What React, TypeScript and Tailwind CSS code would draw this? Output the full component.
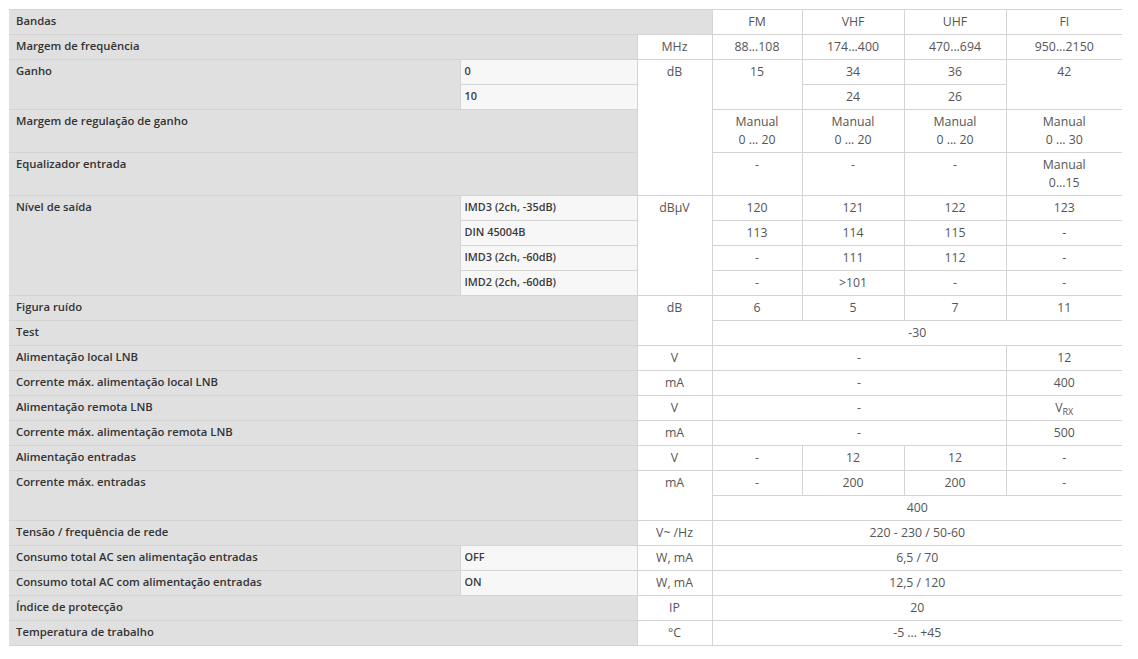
import React from 'react';

type CellProps = {
  children?: React.ReactNode;
  rowSpan?: number;
  colSpan?: number;
  last?: boolean;
};

// label cell (dark grey, bold)
const L: React.FC<CellProps> = ({ children, rowSpan, colSpan }) => (
  <td
    rowSpan={rowSpan}
    colSpan={colSpan}
    className="border border-l-0 border-[#d4d4d4] bg-[#e0e0e0] px-[7px] pt-[2px] pb-[4px] align-top text-left text-[11.3px] leading-[18px] font-semibold text-[#333]"
  >
    {children}
  </td>
);

// sub label cell (light grey)
const S: React.FC<CellProps> = ({ children }) => (
  <td className="border border-[#d4d4d4] bg-[#f7f7f7] px-[4px] pt-[2px] pb-[4px] align-top text-left text-[10.9px] leading-[18px] font-semibold text-[#3a3a3a]">
    {children}
  </td>
);

// unit / value cell (white, centered)
const V: React.FC<CellProps> = ({ children, rowSpan, colSpan, last }) => (
  <td
    rowSpan={rowSpan}
    colSpan={colSpan}
    className={
      'border border-[#d4d4d4] bg-white px-1 pt-[3px] pb-[3px] align-top text-center text-[12.3px] leading-[18px] text-[#555]' +
      (last ? ' border-r-0' : '')
    }
  >
    {children}
  </td>
);

const Two = ({ a, b }: { a: string; b: string }) => (
  <>
    {a}
    <br />
    {b}
  </>
);

export default function App() {
  return (
    <div className="min-h-screen bg-white pl-[9px] pt-[9px]" style={{ fontFamily: '"Open Sans", "Liberation Sans", sans-serif' }}>
      <table className="table-fixed border-collapse w-[1113px]">
        <colgroup>
          <col className="w-[451px]" />
          <col className="w-[177px]" />
          <col className="w-[75px]" />
          <col className="w-[90px]" />
          <col className="w-[102px]" />
          <col className="w-[102px]" />
          <col className="w-[116px]" />
        </colgroup>
        <tbody>
          <tr>
            <L colSpan={3}>Bandas</L>
            <V>FM</V>
            <V>VHF</V>
            <V>UHF</V>
            <V last>FI</V>
          </tr>
          <tr>
            <L colSpan={2}>Margem de frequência</L>
            <V>MHz</V>
            <V>88...108</V>
            <V>174...400</V>
            <V>470...694</V>
            <V last>950...2150</V>
          </tr>
          <tr>
            <L rowSpan={2}>Ganho</L>
            <S>0</S>
            <V rowSpan={4}>dB</V>
            <V rowSpan={2}>15</V>
            <V>34</V>
            <V>36</V>
            <V rowSpan={2} last>42</V>
          </tr>
          <tr>
            <S>10</S>
            <V>24</V>
            <V>26</V>
          </tr>
          <tr>
            <L colSpan={2}>Margem de regulação de ganho</L>
            <V><Two a="Manual" b="0 ... 20" /></V>
            <V><Two a="Manual" b="0 ... 20" /></V>
            <V><Two a="Manual" b="0 ... 20" /></V>
            <V last><Two a="Manual" b="0 ... 30" /></V>
          </tr>
          <tr>
            <L colSpan={2}>Equalizador entrada</L>
            <V>-</V>
            <V>-</V>
            <V>-</V>
            <V last><Two a="Manual" b="0...15" /></V>
          </tr>
          <tr>
            <L rowSpan={4}>Nível de saída</L>
            <S>IMD3 (2ch, -35dB)</S>
            <V rowSpan={4}>dBµV</V>
            <V>120</V>
            <V>121</V>
            <V>122</V>
            <V last>123</V>
          </tr>
          <tr>
            <S>DIN 45004B</S>
            <V>113</V>
            <V>114</V>
            <V>115</V>
            <V last>-</V>
          </tr>
          <tr>
            <S>IMD3 (2ch, -60dB)</S>
            <V>-</V>
            <V>111</V>
            <V>112</V>
            <V last>-</V>
          </tr>
          <tr>
            <S>IMD2 (2ch, -60dB)</S>
            <V>-</V>
            <V>&gt;101</V>
            <V>-</V>
            <V last>-</V>
          </tr>
          <tr>
            <L colSpan={2}>Figura ruído</L>
            <V rowSpan={2}>dB</V>
            <V>6</V>
            <V>5</V>
            <V>7</V>
            <V last>11</V>
          </tr>
          <tr>
            <L colSpan={2}>Test</L>
            <V colSpan={4} last>-30</V>
          </tr>
          <tr>
            <L colSpan={2}>Alimentação local LNB</L>
            <V>V</V>
            <V colSpan={3}>-</V>
            <V last>12</V>
          </tr>
          <tr>
            <L colSpan={2}>Corrente máx. alimentação local LNB</L>
            <V>mA</V>
            <V colSpan={3}>-</V>
            <V last>400</V>
          </tr>
          <tr>
            <L colSpan={2}>Alimentação remota LNB</L>
            <V>V</V>
            <V colSpan={3}>-</V>
            <V last>
              V<sub className="text-[9px] align-baseline relative top-[3px]">RX</sub>
            </V>
          </tr>
          <tr>
            <L colSpan={2}>Corrente máx. alimentação remota LNB</L>
            <V>mA</V>
            <V colSpan={3}>-</V>
            <V last>500</V>
          </tr>
          <tr>
            <L colSpan={2}>Alimentação entradas</L>
            <V>V</V>
            <V>-</V>
            <V>12</V>
            <V>12</V>
            <V last>-</V>
          </tr>
          <tr>
            <L colSpan={2} rowSpan={2}>Corrente máx. entradas</L>
            <V rowSpan={2}>mA</V>
            <V>-</V>
            <V>200</V>
            <V>200</V>
            <V last>-</V>
          </tr>
          <tr>
            <V colSpan={4} last>400</V>
          </tr>
          <tr>
            <L colSpan={2}>Tensão / frequência de rede</L>
            <V>V~ /Hz</V>
            <V colSpan={4} last>220 - 230 / 50-60</V>
          </tr>
          <tr>
            <L>Consumo total AC sen alimentação entradas</L>
            <S>OFF</S>
            <V>W, mA</V>
            <V colSpan={4} last>6,5 / 70</V>
          </tr>
          <tr>
            <L>Consumo total AC com alimentação entradas</L>
            <S>ON</S>
            <V>W, mA</V>
            <V colSpan={4} last>12,5 / 120</V>
          </tr>
          <tr>
            <L colSpan={2}>Índice de protecção</L>
            <V>IP</V>
            <V colSpan={4} last>20</V>
          </tr>
          <tr>
            <L colSpan={2}>Temperatura de trabalho</L>
            <V>°C</V>
            <V colSpan={4} last>-5 ... +45</V>
          </tr>
        </tbody>
      </table>
    </div>
  );
}
